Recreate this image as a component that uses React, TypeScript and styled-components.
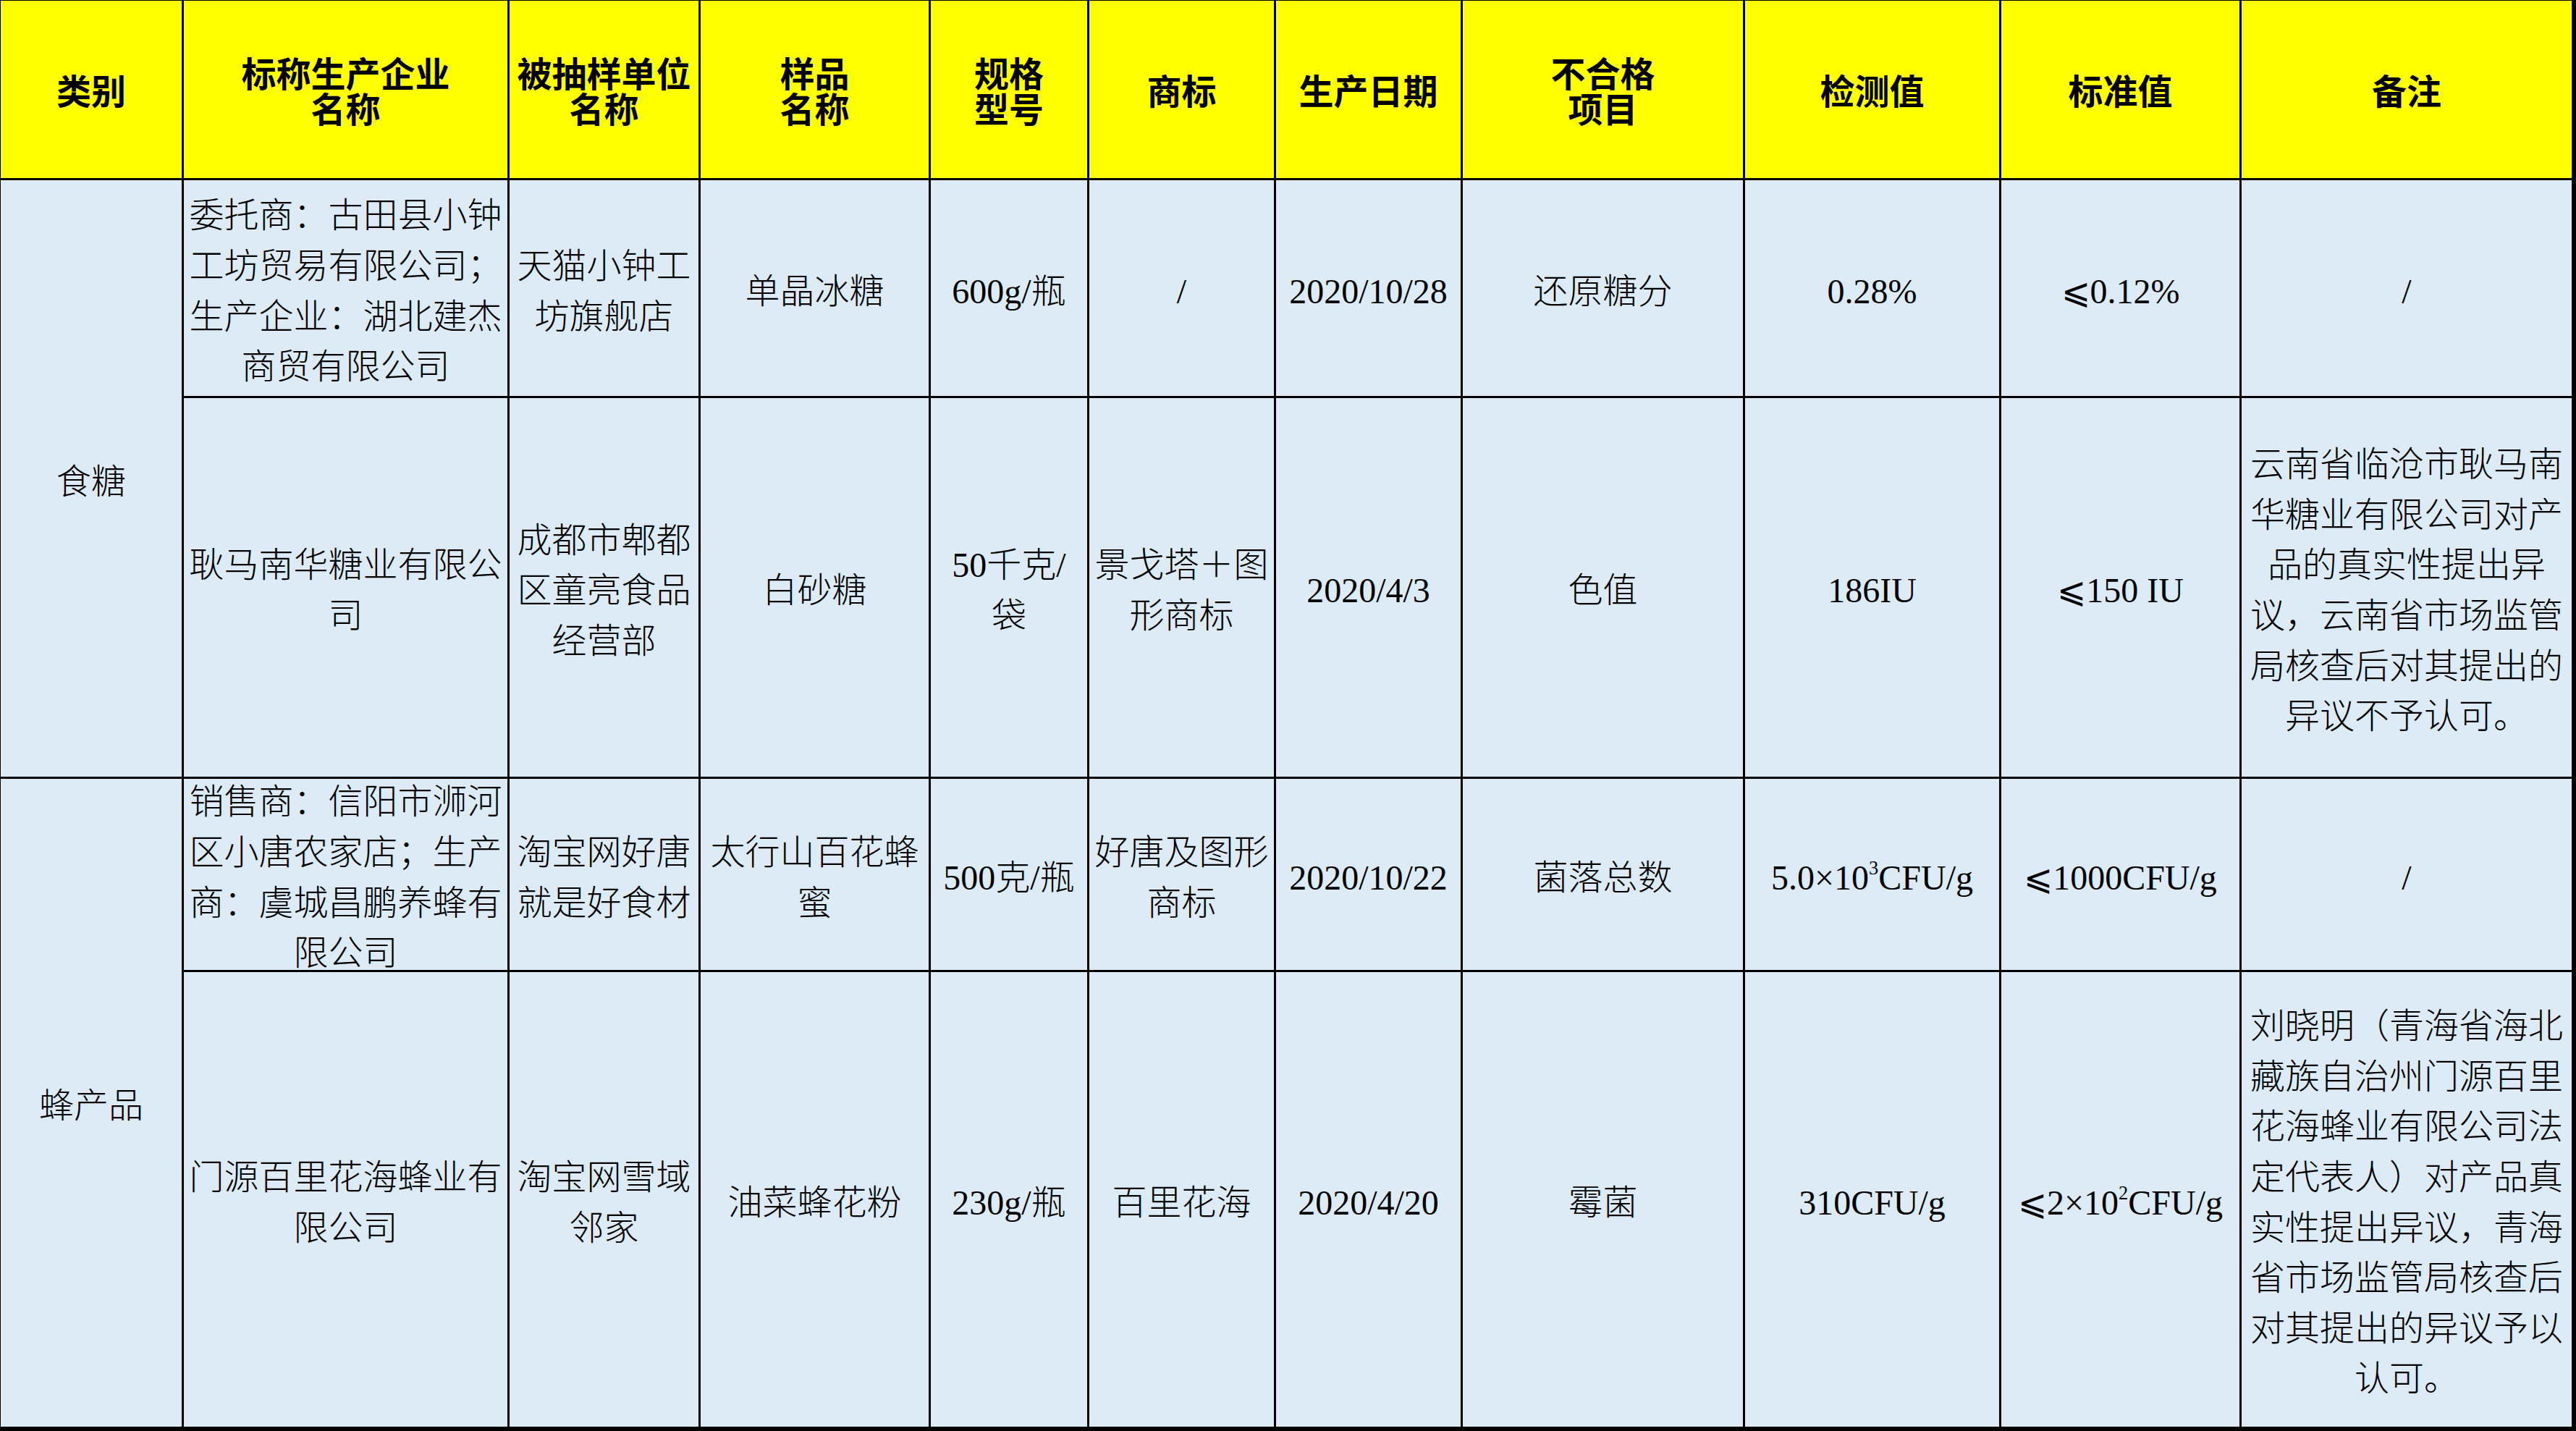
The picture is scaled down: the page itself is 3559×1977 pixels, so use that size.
import React from 'react';
import styled, { createGlobalStyle } from 'styled-components';

const GlobalStyle = createGlobalStyle`
  html, body {
    margin: 0;
    padding: 0;
    background: #000;
  }
`;

const COLUMNS = [250, 447, 261, 315, 216, 255, 255, 387, 351, 329, 456];
const ROWS = [245, 298, 523, 264, 628];

const Sheet = styled.div`
  display: grid;
  grid-template-columns: ${COLUMNS.map((w) => `${w}px`).join(' ')};
  grid-template-rows: ${ROWS.map((h) => `${h}px`).join(' ')};
  gap: 3px;
  padding: 1px 0 3px 1px;
  width: fit-content;
  background: #000;
`;

const BaseCell = styled.div`
  display: flex;
  align-items: center;
  justify-content: center;
  text-align: center;
  overflow: hidden;
  box-sizing: border-box;
  font-size: 48px;
  color: #000;
  white-space: pre-line;
`;

const HeadCell = styled(BaseCell)`
  padding: 0 6px;
  background: #ffff00;
  font-family: 'Noto Sans CJK SC', 'Liberation Sans', sans-serif;
  font-weight: 700;
  line-height: 49px;
`;

const Cell = styled(BaseCell)<{ $span?: number }>`
  padding: 9px 6px 0;
  background: #ddebf7;
  font-family: 'Liberation Serif', 'Noto Sans CJK SC', serif;
  font-weight: 300;
  line-height: 69.6px;
  grid-row: ${({ $span }) => ($span ? `span ${$span}` : 'auto')};
`;

const CellText = styled.div`
  width: 100%;
`;

const Sup = styled.sup`
  font-size: 0.55em;
  line-height: 0;
  vertical-align: 0.8em;
`;

const LE = '⩽';

const headers = [
  '类别',
  '标称生产企业\n名称',
  '被抽样单位\n名称',
  '样品\n名称',
  '规格\n型号',
  '商标',
  '生产日期',
  '不合格\n项目',
  '检测值',
  '标准值',
  '备注',
];

type Row = {
  category?: { name: string; span: number };
  cells: React.ReactNode[];
};

const rows: Row[] = [
  {
    category: { name: '食糖', span: 2 },
    cells: [
      '委托商：古田县小钟工坊贸易有限公司；生产企业：湖北建杰商贸有限公司',
      '天猫小钟工坊旗舰店',
      '单晶冰糖',
      '600g/瓶',
      '/',
      '2020/10/28',
      '还原糖分',
      '0.28%',
      `${LE}0.12%`,
      '/',
    ],
  },
  {
    cells: [
      '耿马南华糖业有限公司',
      '成都市郫都区童亮食品经营部',
      '白砂糖',
      '50千克/\n袋',
      '景戈塔＋图\n形商标',
      '2020/4/3',
      '色值',
      '186IU',
      `${LE}150 IU`,
      '云南省临沧市耿马南华糖业有限公司对产品的真实性提出异议，云南省市场监管局核查后对其提出的异议不予认可。',
    ],
  },
  {
    category: { name: '蜂产品', span: 2 },
    cells: [
      '销售商：信阳市浉河区小唐农家店；生产商：虞城昌鹏养蜂有限公司',
      '淘宝网好唐就是好食材',
      '太行山百花蜂蜜',
      '500克/瓶',
      '好唐及图形商标',
      '2020/10/22',
      '菌落总数',
      <>5.0×10<Sup>3</Sup>CFU/g</>,
      `${LE}1000CFU/g`,
      '/',
    ],
  },
  {
    cells: [
      '门源百里花海蜂业有限公司',
      '淘宝网雪域邻家',
      '油菜蜂花粉',
      '230g/瓶',
      '百里花海',
      '2020/4/20',
      '霉菌',
      '310CFU/g',
      <>{LE}2×10<Sup>2</Sup>CFU/g</>,
      '刘晓明（青海省海北藏族自治州门源百里花海蜂业有限公司法定代表人）对产品真实性提出异议，青海省市场监管局核查后对其提出的异议予以认可。',
    ],
  },
];

export default function App() {
  return (
    <>
      <GlobalStyle />
      <Sheet>
        {headers.map((h) => (
          <HeadCell key={h}>
            <CellText>{h}</CellText>
          </HeadCell>
        ))}
        {rows.map((row, r) => (
          <React.Fragment key={r}>
            {row.category && (
              <Cell $span={row.category.span}>
                <CellText>{row.category.name}</CellText>
              </Cell>
            )}
            {row.cells.map((c, i) => (
              <Cell key={i}>
                <CellText>{c}</CellText>
              </Cell>
            ))}
          </React.Fragment>
        ))}
      </Sheet>
    </>
  );
}
